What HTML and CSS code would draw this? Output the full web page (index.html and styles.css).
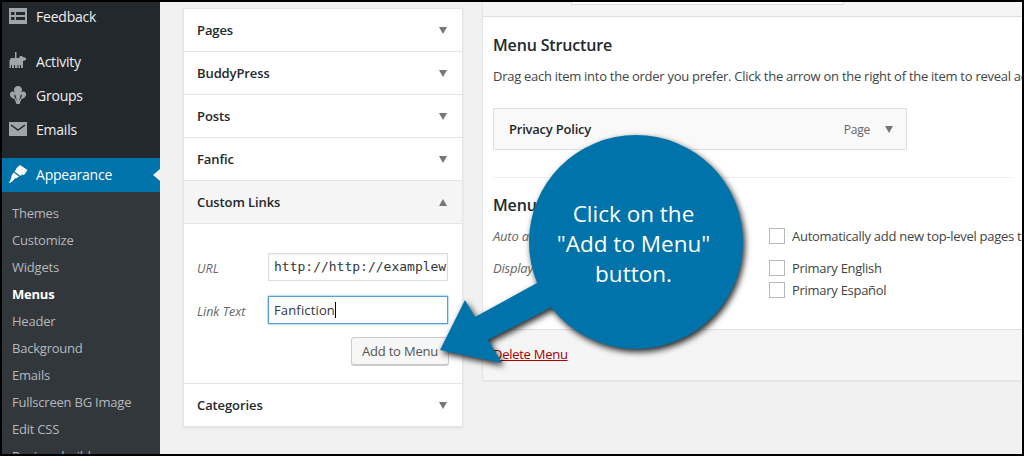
FILE: index.html
```html
<!DOCTYPE html>
<html lang="en">
<head>
<meta charset="utf-8">
<title>Menus</title>
<link rel="stylesheet" href="styles.css">
</head>
<body>
<div class="frame">
  <aside class="sidebar">
    <a class="top-item first">
      <svg class="ico" viewBox="0 0 20 20"><path fill="#a0a5aa" d="M1 2h18v16H1z"/><path fill="#23282d" d="M3 6h3.500v3H3zM8 6h9v3H8zM3 11h3.500v3H3zM8 11h9v3H8z"/></svg>
      <span>Feedback</span>
    </a>
    <a class="top-item gap-top">
      <svg class="ico" viewBox="0 0 20 20"><path fill="#a0a5aa" d="M7 1h1.500v6H11l1-2h2l1 1 3 1v2l-3 1v7h-2v-3h-1v3h-1.500v-3h-1v3H7v-3H6v3H4v-3H3v3H1.500V9.500L3 7h4z"/></svg>
      <span>Activity</span>
    </a>
    <a class="top-item">
      <svg class="ico" viewBox="0 0 20 20"><path fill="#a0a5aa" d="M10 1c2.500 0 4 1.800 4 3.800 0 1-.4 1.900-1 2.700 1-1 2-1.300 3-1 1.500.5 2.500 2 2 3.800-.5 1.600-2.500 3.500-4.500 3.800L11.500 19h-3l-2-4.900C4.500 13.800 2.500 11.900 2 10.300 1.500 8.500 2.500 7 4 6.500c1-.3 2 0 3 1-.6-.8-1-1.700-1-2.700C6 2.800 7.500 1 10 1z"/><path fill="#23282d" d="M7 9l2 7-3-5zM13 9l-2 7 3-5z"/></svg>
      <span>Groups</span>
    </a>
    <a class="top-item">
      <svg class="ico" viewBox="0 0 20 20"><path fill="#a0a5aa" d="M1 3h18v14H1z"/><path fill="none" stroke="#23282d" stroke-width="1.500" d="M3 6l7 5 7-5"/></svg>
      <span>Emails</span>
    </a>
    <a class="top-item current">
      <svg class="ico" viewBox="0 0 20 20"><path fill="#fff" d="M12 1l7.500 5-3.500 5-2-.5-1.500 1.500-6-4.500 1.500-2L8.500 4zM5.800 8.500l5.200 4C9.800 13.800 8.200 14.500 6.800 14.500c-1 1.800-3 3.700-5.300 4.500L1 18.300C2 16.800 3 15 3.300 13.500 3.300 11.500 4.500 9.800 5.800 8.500z"/></svg>
      <span>Appearance</span>
      <i class="notch"></i>
    </a>
    <nav class="submenu">
      <a>Themes</a>
      <a>Customize</a>
      <a>Widgets</a>
      <a class="active">Menus</a>
      <a>Header</a>
      <a>Background</a>
      <a>Emails</a>
      <a>Fullscreen BG Image</a>
      <a>Edit CSS</a>
      <a>Regions builder</a>
    </nav>
  </aside>

  <main class="content">
    <section class="accordion">
      <div class="acc-head"><h3>Pages</h3><i class="tri down"></i></div>
      <div class="acc-head"><h3>BuddyPress</h3><i class="tri down"></i></div>
      <div class="acc-head"><h3>Posts</h3><i class="tri down"></i></div>
      <div class="acc-head"><h3>Fanfic</h3><i class="tri down"></i></div>
      <div class="acc-head open"><h3>Custom Links</h3><i class="tri up"></i></div>
      <div class="acc-body">
        <div class="field">
          <label>URL</label>
          <div class="input mono">http://http://examplew</div>
        </div>
        <div class="field second">
          <label>Link Text</label>
          <div class="input focus">Fanfiction<i class="caret"></i></div>
        </div>
        <div class="btn-row"><button class="btn">Add to Menu</button></div>
      </div>
      <div class="acc-head last"><h3>Categories</h3><i class="tri down"></i></div>
    </section>

    <section class="panel">
      <header class="panel-head"><div class="name-box"></div></header>
      <div class="panel-body">
        <h2>Menu Structure</h2>
        <p class="desc">Drag each item into the order you prefer. Click the arrow on the right of the item to reveal additional configuration options.</p>
        <div class="menu-item">
          <strong>Privacy Policy</strong>
          <span class="type">Page</span>
          <i class="tri down small"></i>
        </div>
        <div class="settings">
          <h2>Menu Settings</h2>
          <div class="set-row">
            <em>Auto add pages</em>
            <div class="checks">
              <label class="check"><i class="box"></i>Automatically add new top-level pages to this menu</label>
            </div>
          </div>
          <div class="set-row display">
            <em>Display location</em>
            <div class="checks tight">
              <label class="check"><i class="box"></i>Primary English</label>
              <label class="check"><i class="box"></i>Primary Español</label>
            </div>
          </div>
        </div>
      </div>
      <footer class="panel-foot"><a class="delete">Delete Menu</a></footer>
    </section>
  </main>

  <div class="callout">
    <svg class="callout-shape" viewBox="0 0 1024 456" width="1024" height="456">
      <path fill="#0073aa" d="M537 283L475 317 465 300 440 350 502 363 488 340 552 307z"/>
      <circle fill="#0073aa" cx="636" cy="242" r="107"/>
    </svg>
    <p class="callout-text">Click on the<br>"Add to Menu"<br>button.</p>
  </div>
</div>
</body>
</html>
```
FILE: styles.css
```css
* { box-sizing: border-box; }
html, body { margin: 0; height: 100%; }
body { width: 1024px; height: 456px; overflow: hidden; background: #000; font-family: "Open Sans", sans-serif; font-size: 13px; letter-spacing: -.22px; color: #444; }
.frame { position: relative; width: 1024px; height: 456px; display: flex; overflow: hidden; background: #f1f1f1; border: 2px solid #000; }

.sidebar { width: 158px; flex: none; background: #23282d; color: #eee; overflow: hidden; }
.top-item { display: flex; align-items: center; height: 34px; gap: 8px; padding: 0 0 0 6px; font-size: 14px; color: #eee; position: relative; }
.top-item span { position: relative; top: -0.500px; }
.top-item .ico { margin-top: -2px; }
.top-item.first { height: 30px; }
.top-item.gap-top { margin-top: 13px; }
.top-item.current { height: 34px; margin-top: 11px; background: #0073aa; color: #fff; }
.ico { width: 20px; height: 20px; flex: none; }
.notch { position: absolute; right: 0; top: 11px; border: 6px solid transparent; border-left-width: 0; border-right: 7px solid #f1f1f1; }
.submenu { background: #32373c; padding: 8px 0 0 10px; display: flex; flex-direction: column; }
.submenu a { height: 27px; line-height: 27px; font-size: 13px; color: #b4b9be; white-space: nowrap; }
.submenu a.active { color: #fff; font-weight: 700; }

.content { flex: 1; display: flex; align-items: flex-start; min-width: 0; padding: 6px 0 0 23px; gap: 19px; }

.accordion { width: 280px; flex: none; background: #fff; border: 1px solid #e5e5e5; border-bottom: 0; box-shadow: 0 1px 2px rgba(0,0,0,.08); }
.acc-head { height: 43px; display: flex; align-items: center; justify-content: space-between; padding: 0 15px 0 13px; border-bottom: 1px solid #e5e5e5; background: #fff; }
.acc-head.open { background: #f5f5f5; }
.acc-head h3 { margin: 0; font-size: 13px; font-weight: 600; letter-spacing: -.1px; color: #23282d; }
.tri { display: block; width: 0; height: 0; border-left: 4.500px solid transparent; border-right: 4.500px solid transparent; }
.tri.down { border-top: 7px solid #72777c; }
.tri.up { border-bottom: 7px solid #72777c; }
.acc-body { height: 160px; padding: 29px 14px 0 13px; border-bottom: 1px solid #e5e5e5; }
.field { display: flex; align-items: center; justify-content: space-between; height: 28px; }
.field.second { margin-top: 15px; }
.field label { padding-top: 2px; font-style: italic; font-size: 12.500px; letter-spacing: 0; color: #666; }
.input { width: 180px; height: 28px; border: 1px solid #ddd; padding: 0 5px; line-height: 26px; font-size: 13px; letter-spacing: .15px; color: #32373c; white-space: nowrap; overflow: hidden; box-shadow: inset 0 1px 2px rgba(0,0,0,.07); }
.input.mono { font-family: "DejaVu Sans Mono", monospace; letter-spacing: 0; }
.input.focus { border-color: #5b9dd9; box-shadow: 0 0 2px rgba(30,140,190,.8); }
.caret { display: inline-block; width: 1px; height: 16px; background: #000; vertical-align: -3px; }
.btn-row { display: flex; justify-content: flex-end; margin: 13px -1px 0 0; }
.btn { width: 98px; height: 28px; padding: 0; border: 1px solid #ccc; border-radius: 3px; background: #f7f7f7; box-shadow: 0 1px 0 #ccc; font: 13px "Open Sans", sans-serif; letter-spacing: -.2px; color: #555; }

.panel { flex: 1; min-width: 0; margin-top: -6px; border: 1px solid #e5e5e5; border-top: 0; border-right: 0; background: #fff; overflow: hidden; box-shadow: 0 1px 1px rgba(0,0,0,.04); }
.panel-head { height: 15px; background: #f5f5f5; border-bottom: 1px solid #dfdfdf; padding-left: 88px; }
.name-box { width: 273px; height: 3px; background: #fff; border: 1px solid #ddd; border-top: 0; }
.panel-body { padding: 0 10px; height: 312px; }
.panel-body h2 { margin: 0; font-size: 16px; font-weight: 600; letter-spacing: -.15px; color: #23282d; line-height: 22px; }
.panel-body > h2 { padding-top: 17px; }
.desc { margin: 11px 0 0; font-size: 13px; letter-spacing: -.27px; line-height: 18px; white-space: nowrap; color: #444; }
.menu-item { width: 414px; height: 42px; margin-top: 23px; display: flex; align-items: center; padding: 0 13px 0 15px; background: #f9f9f9; border: 1px solid #dfdfdf; }
.menu-item strong { flex: 1; font-size: 13px; font-weight: 600; color: #23282d; }
.type { font-size: 12px; color: #666; margin-right: 15px; }
.settings { margin-top: 27px; border-top: 1px solid #eee; padding-top: 16px; }
.set-row { display: flex; margin-top: 12px; }
.set-row em { width: 276px; flex: none; margin-top: -1px; font-size: 13px; color: #666; }
.set-row.display { margin-top: 15px; }
.checks { display: flex; flex-direction: column; gap: 6px; }
.check { display: flex; align-items: center; gap: 7px; font-size: 13px; letter-spacing: -.28px; line-height: 16px; white-space: nowrap; color: #444; }
.box { width: 16px; height: 16px; flex: none; border: 1px solid #b4b9be; background: #fff; }
.panel-foot { height: 51px; background: #f5f5f5; border-top: 1px solid #dfdfdf; padding: 15px 10px 0; }
.delete { color: #a00; text-decoration: underline; font-size: 13px; letter-spacing: -.27px; }

.callout { position: absolute; left: -2px; top: -2px; width: 1024px; height: 456px; pointer-events: none; }
.callout-shape { display: block; filter: drop-shadow(2px 3px 3px rgba(0,0,0,.85)); }
.callout-text { position: absolute; left: 528px; top: 199px; width: 211px; margin: 0; text-align: center; font-size: 22.500px; letter-spacing: 0; line-height: 30px; color: #fff; }
```
